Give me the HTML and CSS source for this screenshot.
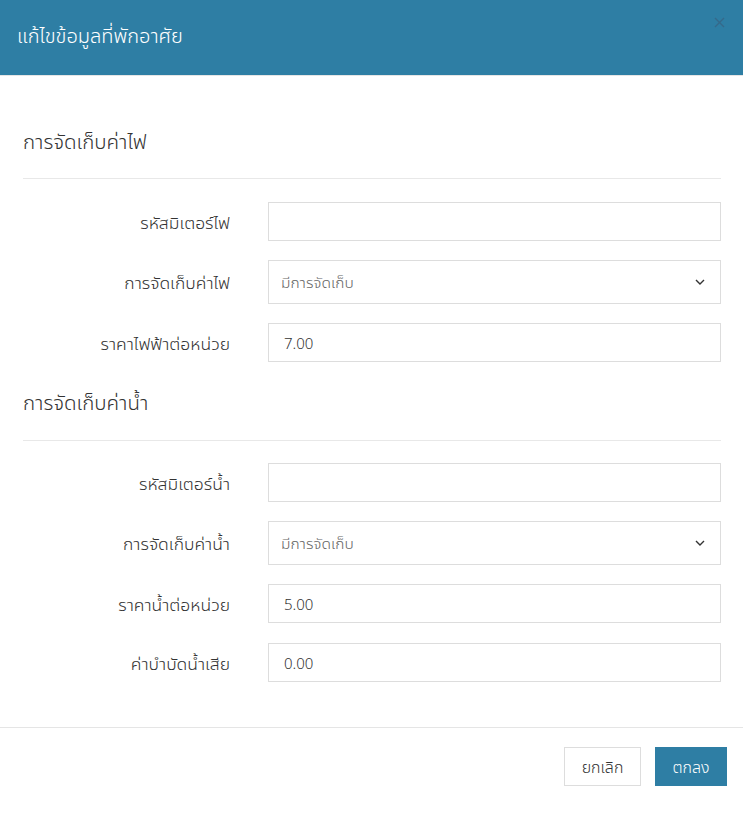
FILE: index.html
```html
<!DOCTYPE html>
<html lang="th">
<head>
<meta charset="utf-8">
<title>แก้ไขข้อมูลที่พักอาศัย</title>
<link rel="stylesheet" href="styles.css">
</head>
<body>
<div class="modal">
  <div class="modal-header">
    <h3 class="modal-title">แก้ไขข้อมูลที่พักอาศัย</h3>
    <button class="close" type="button" aria-label="close">
      <svg width="11" height="11" viewBox="0 0 11 11"><path d="M1 1L10 10M10 1L1 10" stroke="currentColor" stroke-width="1.3" fill="none"/></svg>
    </button>
  </div>
  <div class="modal-body">
    <div class="section">
      <h4 class="section-title">การจัดเก็บค่าไฟ</h4>
      <hr class="divider">
      <div class="form-row">
        <label class="form-label">รหัสมิเตอร์ไฟ</label>
        <input class="form-control" type="text" value="">
      </div>
      <div class="form-row">
        <label class="form-label">การจัดเก็บค่าไฟ</label>
        <div class="select">
          <span class="select-text">มีการจัดเก็บ</span>
          <svg class="chevron" width="10" height="6" viewBox="0 0 10 6"><path d="M1 1L5 5L9 1" stroke="#333" stroke-width="1.4" fill="none"/></svg>
        </div>
      </div>
      <div class="form-row">
        <label class="form-label">ราคาไฟฟ้าต่อหน่วย</label>
        <input class="form-control" type="text" value="7.00">
      </div>
    </div>
    <div class="section section-2">
      <h4 class="section-title">การจัดเก็บค่าน้ำ</h4>
      <hr class="divider">
      <div class="form-row">
        <label class="form-label">รหัสมิเตอร์น้ำ</label>
        <input class="form-control" type="text" value="">
      </div>
      <div class="form-row">
        <label class="form-label">การจัดเก็บค่าน้ำ</label>
        <div class="select">
          <span class="select-text">มีการจัดเก็บ</span>
          <svg class="chevron" width="10" height="6" viewBox="0 0 10 6"><path d="M1 1L5 5L9 1" stroke="#333" stroke-width="1.4" fill="none"/></svg>
        </div>
      </div>
      <div class="form-row">
        <label class="form-label">ราคาน้ำต่อหน่วย</label>
        <input class="form-control" type="text" value="5.00">
      </div>
      <div class="form-row">
        <label class="form-label">ค่าบำบัดน้ำเสีย</label>
        <input class="form-control" type="text" value="0.00">
      </div>
    </div>
  </div>
  <div class="modal-footer">
    <button class="btn btn-default" type="button">ยกเลิก</button>
    <button class="btn btn-primary" type="button">ตกลง</button>
  </div>
</div>
</body>
</html>
```
FILE: styles.css
```css
* { box-sizing: border-box; }
html, body { margin: 0; padding: 0; background: #fff; }
body {
  font-family: "Noto Sans Thai UI", "Noto Sans", "Open Sans", sans-serif;
  font-weight: 300;
  color: #333;
  width: 743px;
  height: 814px;
  overflow: hidden;
}
.modal { width: 743px; }
.modal-header {
  height: 76px;
  background: #2e7ea4;
  display: flex;
  align-items: center;
  justify-content: space-between;
  padding: 0 17px;
  border-bottom: 1px solid #e5e5e5;
}
.modal-title {
  margin: 0;
  font-size: 20px;
  font-weight: 300;
  color: #fff;
  line-height: 28px;
  margin-top: -4px;
}
.close {
  background: none;
  border: 0;
  padding: 0;
  color: #35698a;
  align-self: flex-start;
  margin-top: 17px;
  margin-right: 1px;
  display: flex;
}
.modal-body { padding: 51px 22px 45px 23px; }
.section-title {
  margin: 0;
  font-size: 20.5px;
  font-weight: 300;
  line-height: 28px;
  color: #333;
}
.divider {
  margin: 23px 0 23px 0;
  border: 0;
  border-top: 1px solid #e8e8e8;
}
.section-2 { margin-top: 26px; }
.section-2 .divider { margin: 24px 0 22px 0; }
.form-row {
  display: grid;
  grid-template-columns: 222px 1fr;
  column-gap: 23px;
  align-items: center;
  margin-bottom: 19px;
}
.section-2 .form-row:nth-child(5) { margin-bottom: 20px; }
.section .form-row:last-child { margin-bottom: 0; }
.form-label {
  text-align: right;
  padding-right: 15px;
  font-size: 17.5px;
  font-weight: 300;
  color: #333;
}
.form-control {
  height: 39px;
  border: 1px solid #ddd;
  border-radius: 0;
  padding: 0 15px;
  font-family: inherit;
  font-weight: 300;
  font-size: 15px;
  color: #333;
  width: 100%;
  outline: none;
}
.select {
  height: 44px;
  border: 1px solid #ddd;
  padding: 0 15px 0 12px;
  display: flex;
  align-items: center;
  justify-content: space-between;
  font-size: 15.5px;
  color: #666;
}
.modal-footer {
  border-top: 1px solid #e5e5e5;
  padding: 19px 16px 28px;
  display: flex;
  justify-content: flex-end;
  gap: 14px;
}
.btn {
  height: 39px;
  font-family: inherit;
  font-weight: 300;
  font-size: 16px;
  border-radius: 0;
  padding: 0 14px;
  cursor: pointer;
}
.btn-default {
  background: #fff;
  border: 1px solid #ddd;
  color: #333;
  width: 77px;
}
.btn-primary {
  background: #2e7ea4;
  border: 1px solid #2e7ea4;
  color: #fff;
  width: 72px;
}
```
